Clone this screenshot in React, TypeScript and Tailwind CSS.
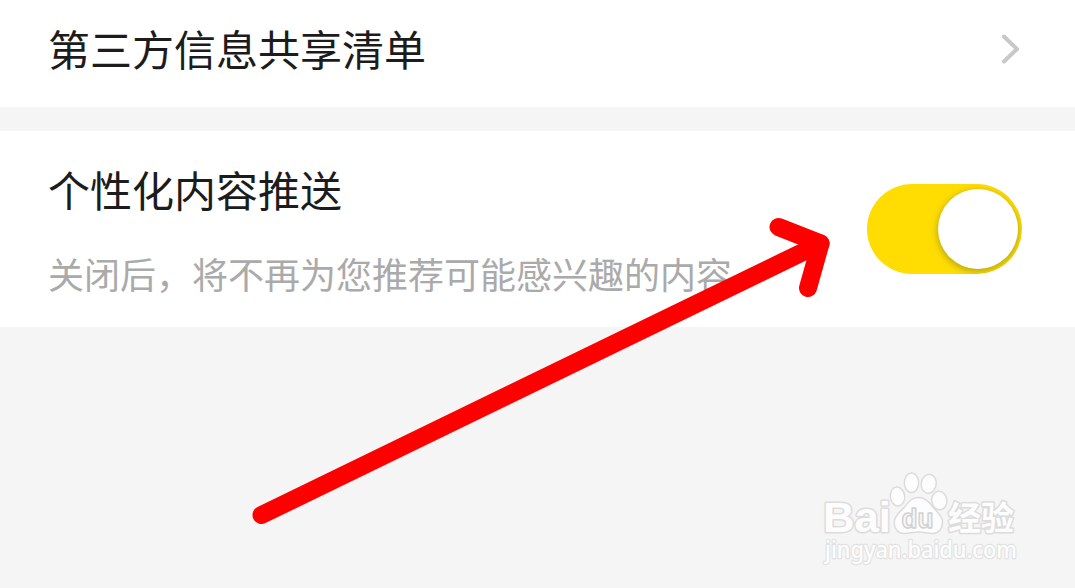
import { useState } from "react";

const App = () => {
  const [enabled, setEnabled] = useState(true);

  return (
    <div className="relative flex h-[588px] w-[1075px] flex-col overflow-hidden bg-[#f5f5f5] font-['Noto_Sans_CJK_SC','Noto_Sans',sans-serif]">
      <div className="flex h-[107px] items-start justify-between bg-white pt-[18px] pr-[54px] pl-12">
        <h3 className="text-[42px] leading-[60px] font-normal text-[#1c1c1c]">
          第三方信息共享清单
        </h3>
        <Chevron />
      </div>

      <div className="mt-6 flex h-[196px] items-start justify-between bg-white pr-[53px] pl-12">
        <div>
          <h3 className="mt-[28px] text-[42px] leading-[60px] font-normal text-[#1c1c1c]">
            个性化内容推送
          </h3>
          <p className="mt-[28px] text-[36px] leading-[52px] font-normal text-[#aaaaaa]">
            关闭后，将不再为您推荐可能感兴趣的内容
          </p>
        </div>
        <Toggle checked={enabled} onChange={() => setEnabled(!enabled)} />
      </div>

      <Arrow />
      <Watermark />
    </div>
  );
};
export default App;

const Chevron = () => {
  return (
    <svg className="mt-4 h-8 w-[22px]" viewBox="0 0 22 32" fill="none">
      <path
        d="M5 2.5 L18 15 L5 27.5"
        stroke="#c8c8c8"
        strokeWidth="4"
        strokeLinecap="round"
        strokeLinejoin="round"
      />
    </svg>
  );
};

type ToggleProps = {
  checked: boolean;
  onChange: () => void;
};

const Toggle = ({ checked, onChange }: ToggleProps) => {
  return (
    <button
      type="button"
      role="switch"
      aria-checked={checked}
      onClick={onChange}
      className={
        checked
          ? "mt-[53px] flex h-[90px] w-[155px] items-center justify-end overflow-hidden rounded-full bg-[#ffdd03] pr-1"
          : "mt-[53px] flex h-[90px] w-[155px] items-center justify-start overflow-hidden rounded-full bg-[#dddddd] pl-1"
      }
    >
      <span className="size-20 rounded-full bg-white shadow-[0_2px_6px_1px_rgba(90,90,50,0.4)]" />
    </button>
  );
};

const Arrow = () => {
  return (
    <svg
      className="pointer-events-none absolute inset-0"
      width="1075"
      height="588"
      viewBox="0 0 1075 588"
      fill="none"
      stroke="#ff0000"
      strokeWidth="18"
      strokeLinecap="round"
      strokeLinejoin="round"
    >
      <path d="M261.5 515 L820.5 243.5" />
      <path d="M778.5 227 L820.5 243.5 L808 288" />
    </svg>
  );
};

const Watermark = () => {
  return (
    <svg
      className="pointer-events-none absolute top-[460px] left-[810px]"
      width="220"
      height="115"
      viewBox="0 0 220 115"
      fill="#fdfdfd"
      stroke="#dcdcdc"
      strokeWidth="1.5"
      strokeLinejoin="round"
    >
      <g fontWeight="bold" paintOrder="stroke" strokeWidth="3">
        <text
          x="13"
          y="71.5"
          fontSize="42"
          textLength="68"
          lengthAdjust="spacingAndGlyphs"
          fontFamily="Liberation Sans, sans-serif"
        >
          Bai
        </text>
        <text
          x="138"
          y="69.5"
          fontSize="33"
          textLength="66"
          lengthAdjust="spacingAndGlyphs"
          fontFamily="Noto Sans CJK SC, sans-serif"
        >
          经验
        </text>
      </g>

      {/* paw */}
      <ellipse cx="87.5" cy="36.5" rx="7.2" ry="9.5" transform="rotate(-8 87.5 36.5)" />
      <ellipse cx="101.5" cy="22.8" rx="7.2" ry="9.8" />
      <ellipse cx="118.7" cy="23.8" rx="7.5" ry="9.5" transform="rotate(10 118.7 23.8)" />
      <ellipse cx="129.3" cy="40.5" rx="7.5" ry="9.3" transform="rotate(-8 129.3 40.5)" />
      <path d="M108.5 37.5 C101.5 37.5 98.5 42 95 46.5 C91 51 84.5 55 84.2 62.5 C84 69 88.5 73.5 94 73.5 C99 73.5 103 72 108.5 72 C114 72 118 73.8 123 73.5 C129 73 132.8 68.5 132.5 62 C132 55 126.5 51.5 122.5 46.5 C119 42 115.5 37.5 108.5 37.5 Z" />
      <text
        x="91.5"
        y="68"
        fontSize="27"
        textLength="32"
        lengthAdjust="spacingAndGlyphs"
        fontFamily="Liberation Sans, sans-serif"
        fontWeight="bold"
        fill="#f7f7f7"
        stroke="#d2d2d2"
      >
        du
      </text>

      <text
        x="15"
        y="98"
        fontSize="23"
        textLength="192"
        lengthAdjust="spacingAndGlyphs"
        fontFamily="Noto Sans, sans-serif"
        fontWeight="500"
        paintOrder="stroke"
        stroke="#e2e2e2"
        strokeWidth="2.4"
      >
        jingyan.baidu.com
      </text>
    </svg>
  );
};
